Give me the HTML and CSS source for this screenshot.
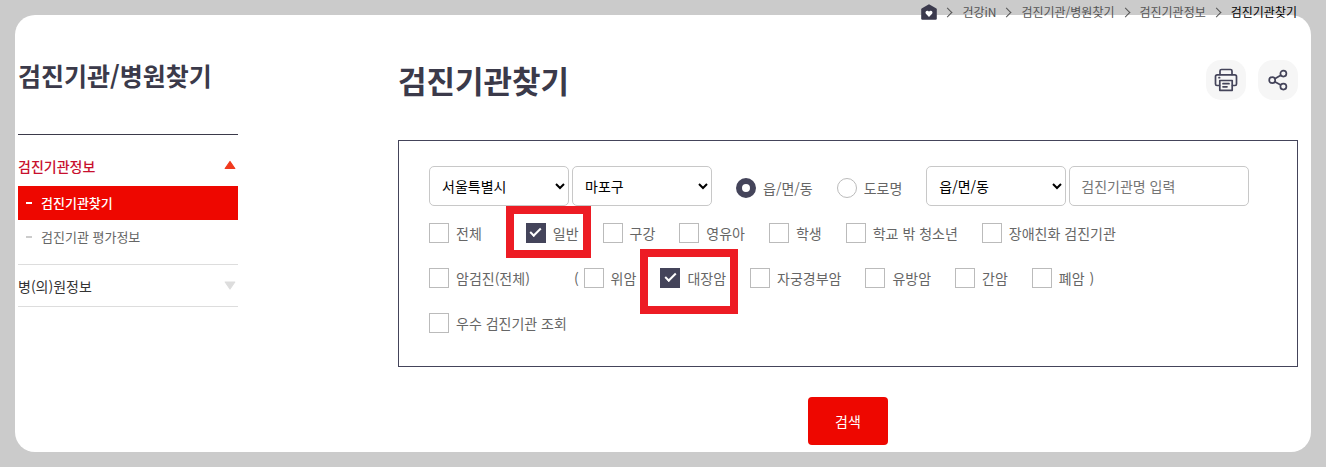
FILE: index.html
```html
<!DOCTYPE html>
<html lang="ko">
<head>
    <meta charset="UTF-8">
    <meta name="viewport" content="width=device-width, initial-scale=1">
    <title>검진기관찾기</title>
    <link rel="stylesheet" href="styles.css">
</head>
<body>

<div class="container">
    <nav class="location">
        <a href="#" class="home" aria-label="홈">
            <svg width="16" height="16" viewBox="0 0 16 16">
                <path d="M8 0.2 L15 4.2 Q15.8 4.7 15.8 5.6 V14.6 Q15.8 15.8 14.6 15.8 H1.4 Q0.2 15.8 0.2 14.6 V5.6 Q0.2 4.7 1 4.2 Z" fill="#3b3a4d"/>
                <path d="M8 13 L4.9 9.8 C3.8 8.4 5 6.6 6.5 6.8 Q7.5 7 8 7.8 Q8.5 7 9.5 6.8 C11 6.6 12.2 8.4 11.1 9.8 Z" fill="#fff"/>
            </svg>
        </a>
        <a href="#">건강iN</a>
        <a href="#">검진기관/병원찾기</a>
        <a href="#">검진기관정보</a>
        <a href="#" class="current">검진기관찾기</a>
    </nav>

    <aside class="side">
        <h2>검진기관/병원찾기</h2>
        <ul class="menu">
            <li class="open">
                <a href="#" class="menu-title">검진기관정보
                    <svg width="12" height="12" viewBox="0 0 12 12"><path d="M6 1.5 L10.8 8.5 H1.2 Z" fill="#f03a1e" stroke="#f03a1e" stroke-width="1.2" stroke-linejoin="round"/></svg>
                </a>
                <ul class="sub">
                    <li class="selected"><a href="#">검진기관찾기</a></li>
                    <li><a href="#">검진기관 평가정보</a></li>
                </ul>
            </li>
            <li>
                <a href="#" class="menu-title">병(의)원정보
                    <svg width="12" height="12" viewBox="0 0 12 12"><path d="M1.2 2 H10.8 L6 9 Z" fill="#ddd" stroke="#ddd" stroke-width="1.2" stroke-linejoin="round"/></svg>
                </a>
            </li>
        </ul>
    </aside>

    <main class="content">
        <div class="head">
            <h1>검진기관찾기</h1>
            <div class="tools">
                <button type="button" aria-label="인쇄">
                    <svg width="24" height="24" viewBox="0 0 24 24" fill="none" stroke="#44445a" stroke-width="1.7" stroke-linejoin="round" stroke-linecap="round">
                        <path d="M6 6.5 V3 Q6 1.5 7.5 1.5 H16.5 Q18 1.5 18 3 V6.5"/>
                        <path d="M5.5 17.5 H3 Q1.5 17.5 1.5 16 V8.5 Q1.5 6.8 3.2 6.8 H20.8 Q22.5 6.8 22.5 8.5 V16 Q22.5 17.5 21 17.5 H18.5"/>
                        <path d="M5.8 12.5 H18.2 V22.3 H5.8 Z"/>
                        <path d="M9 15.7 H15 M9 18.8 H13 M5 9.7 H5.6"/>
                    </svg>
                </button>
                <button type="button" aria-label="공유">
                    <svg width="24" height="24" viewBox="0 0 24 24" fill="none" stroke="#44445a" stroke-width="1.7">
                        <circle cx="6.2" cy="12.2" r="3"/>
                        <circle cx="17.4" cy="5.6" r="3"/>
                        <circle cx="17.4" cy="18.6" r="3"/>
                        <path d="M8.8 10.7 L14.8 7.2 M8.8 13.7 L14.8 17.1"/>
                    </svg>
                </button>
            </div>
        </div>

        <form>
            <div class="search">
                <div class="row region">
                    <select aria-label="시/도"><option>서울특별시</option></select>
                    <select aria-label="시/군/구"><option>마포구</option></select>
                    <div class="radios">
                        <label><input type="radio" name="addr" checked>읍/면/동</label>
                        <label><input type="radio" name="addr">도로명</label>
                    </div>
                    <select aria-label="읍/면/동"><option>읍/면/동</option></select>
                    <input type="text" placeholder="검진기관명 입력" aria-label="검진기관명">
                </div>
                <div class="row">
                    <label class="all"><input type="checkbox">전체</label>
                    <label><input type="checkbox" checked>일반<span class="mark"></span></label>
                    <label><input type="checkbox">구강</label>
                    <label><input type="checkbox">영유아</label>
                    <label><input type="checkbox">학생</label>
                    <label><input type="checkbox">학교 밖 청소년</label>
                    <label><input type="checkbox">장애친화 검진기관</label>
                </div>
                <div class="row">
                    <label class="all"><input type="checkbox">암검진(전체)</label>
                    <div class="paren">
                        <span>(</span>
                        <label><input type="checkbox">위암</label>
                    </div>
                    <label><input type="checkbox" checked>대장암<span class="mark large"></span></label>
                    <label><input type="checkbox">자궁경부암</label>
                    <label><input type="checkbox">유방암</label>
                    <label><input type="checkbox">간암</label>
                    <div class="paren">
                        <label><input type="checkbox">폐암</label>
                        <span>)</span>
                    </div>
                </div>
                <div class="row">
                    <label><input type="checkbox">우수 검진기관 조회</label>
                </div>
            </div>
            <button type="submit" class="submit">검색</button>
        </form>
    </main>
</div>

</body>
</html>
```
FILE: styles.css
```css
*{
    margin: 0;
    padding: 0;
    box-sizing: border-box;
}
body{
    background: #cbcbcb;
    padding: 15px;
    font: 14px/20px "Noto Sans CJK KR", sans-serif;
    color: #666;
}
ul{
    list-style: none;
}
a{
    color: inherit;
    text-decoration: none;
}
svg{
    display: block;
}
button, select, input{
    font: inherit;
}

.container{
    position: relative;
    display: flex;
    gap: 160px;
    padding: 45px 13px 7px 3px;
    background: #fff;
    border-radius: 20px;
}

/* breadcrumb, over the top edge of the panel */
.location{
    position: absolute;
    top: -12px;
    right: 14px;
    display: flex;
    align-items: center;
    font-size: 12px;
    line-height: 18px;
    color: #555;
}
.location a + a{
    display: flex;
    align-items: center;
}
.location a + a::before{
    content: "";
    width: 6px;
    height: 6px;
    margin: 0 11px 0 7px;
    border: solid #555;
    border-width: 1px 1px 0 0;
    transform: rotate(45deg);
}
.location .current{
    color: #000;
}

/* side menu */
.side{
    flex: 0 0 220px;
}
.side h2{
    height: 74px;
    font-size: 25px;
    line-height: 30px;
    font-weight: 700;
    color: #3b3a4a;
    white-space: nowrap;
}
.menu{
    border-top: 1px solid #3b3a4a;
}
.menu > li{
    border-bottom: 1px solid #ddd;
}
.menu-title{
    display: flex;
    align-items: center;
    justify-content: space-between;
    height: 41px;
    padding-right: 2px;
    color: #333;
}
.open .menu-title{
    height: 51px;
    padding-top: 11px;
    color: #c8102e;
    font-weight: 500;
}
.sub{
    padding-bottom: 27px;
    font-size: 13px;
}
.sub a{
    display: flex;
    align-items: center;
    height: 34px;
    padding-left: 8px;
}
.sub a::before{
    content: "";
    width: 6px;
    height: 2px;
    margin-right: 9px;
    background: #ccc;
}
.sub li + li{
    height: 17px;
}
.sub .selected a{
    background: #ee0700;
    color: #fff;
    font-weight: 500;
}
.sub .selected a::before{
    background: #fff;
}

/* page title */
.content{
    flex: 1;
    min-width: 0;
}
.head{
    display: flex;
    align-items: center;
    justify-content: space-between;
    margin-bottom: 40px;
}
.head h1{
    font-size: 31px;
    line-height: 40px;
    font-weight: 700;
    color: #3b3a4a;
}
.tools{
    display: flex;
    gap: 12px;
}
.tools button{
    width: 40px;
    height: 40px;
    padding: 8px;
    border: 0;
    border-radius: 15px;
    background: #f6f6f6;
    cursor: pointer;
}

/* search form */
.search{
    display: flex;
    flex-direction: column;
    gap: 25px;
    padding: 25px 30px 33px;
    border: 1px solid #44445a;
}
.row{
    display: flex;
    flex-wrap: wrap;
    gap: 24px;
}
.region{
    gap: 3px;
    margin-bottom: -8px;
}
.row label{
    position: relative;
    display: flex;
    align-items: center;
    gap: 7px;
    line-height: 20px;
}
.row .all{
    margin-right: 20px;
}
.paren{
    display: flex;
    gap: 5px;
}
.radios{
    display: flex;
    gap: 24px;
    padding: 4px 21px 0;
}
select, input[type=text]{
    width: 140px;
    height: 40px;
    padding: 0 8px;
    border: 1px solid #c8c8c8;
    border-radius: 5px;
    background: #fff;
    color: #000;
}
select{
    padding-right: 0;
}
input[type=text]{
    width: 180px;
    padding: 0 11px;
}
input::placeholder{
    color: #757575;
}
input[type=checkbox], input[type=radio]{
    appearance: none;
    width: 20px;
    height: 20px;
    border: 1px solid #bbb;
    background: #fff;
}
input[type=radio]{
    border-radius: 50%;
}
input[type=radio]:checked{
    border: 6px solid #44445a;
}
input[type=checkbox]:checked{
    display: grid;
    place-items: center;
    border-color: #44445a;
    background: #44445a;
}
input[type=checkbox]:checked::before{
    content: "";
    width: 11px;
    height: 6px;
    margin-bottom: 4px;
    box-sizing: border-box;
    border: solid #fff;
    border-width: 0 0 2px 2px;
    transform: rotate(-45deg);
}
.mark{
    position: absolute;
    top: -17px;
    right: -12px;
    bottom: -15px;
    left: -20px;
    border: 8px solid #ed1c24;
    pointer-events: none;
}
.mark.large{
    top: -19px;
    bottom: -26px;
}
.submit{
    display: block;
    width: 80px;
    height: 48px;
    margin: 30px auto 0;
    border: 0;
    border-radius: 4px;
    background: #ee0700;
    color: #fff;
    cursor: pointer;
}
```
